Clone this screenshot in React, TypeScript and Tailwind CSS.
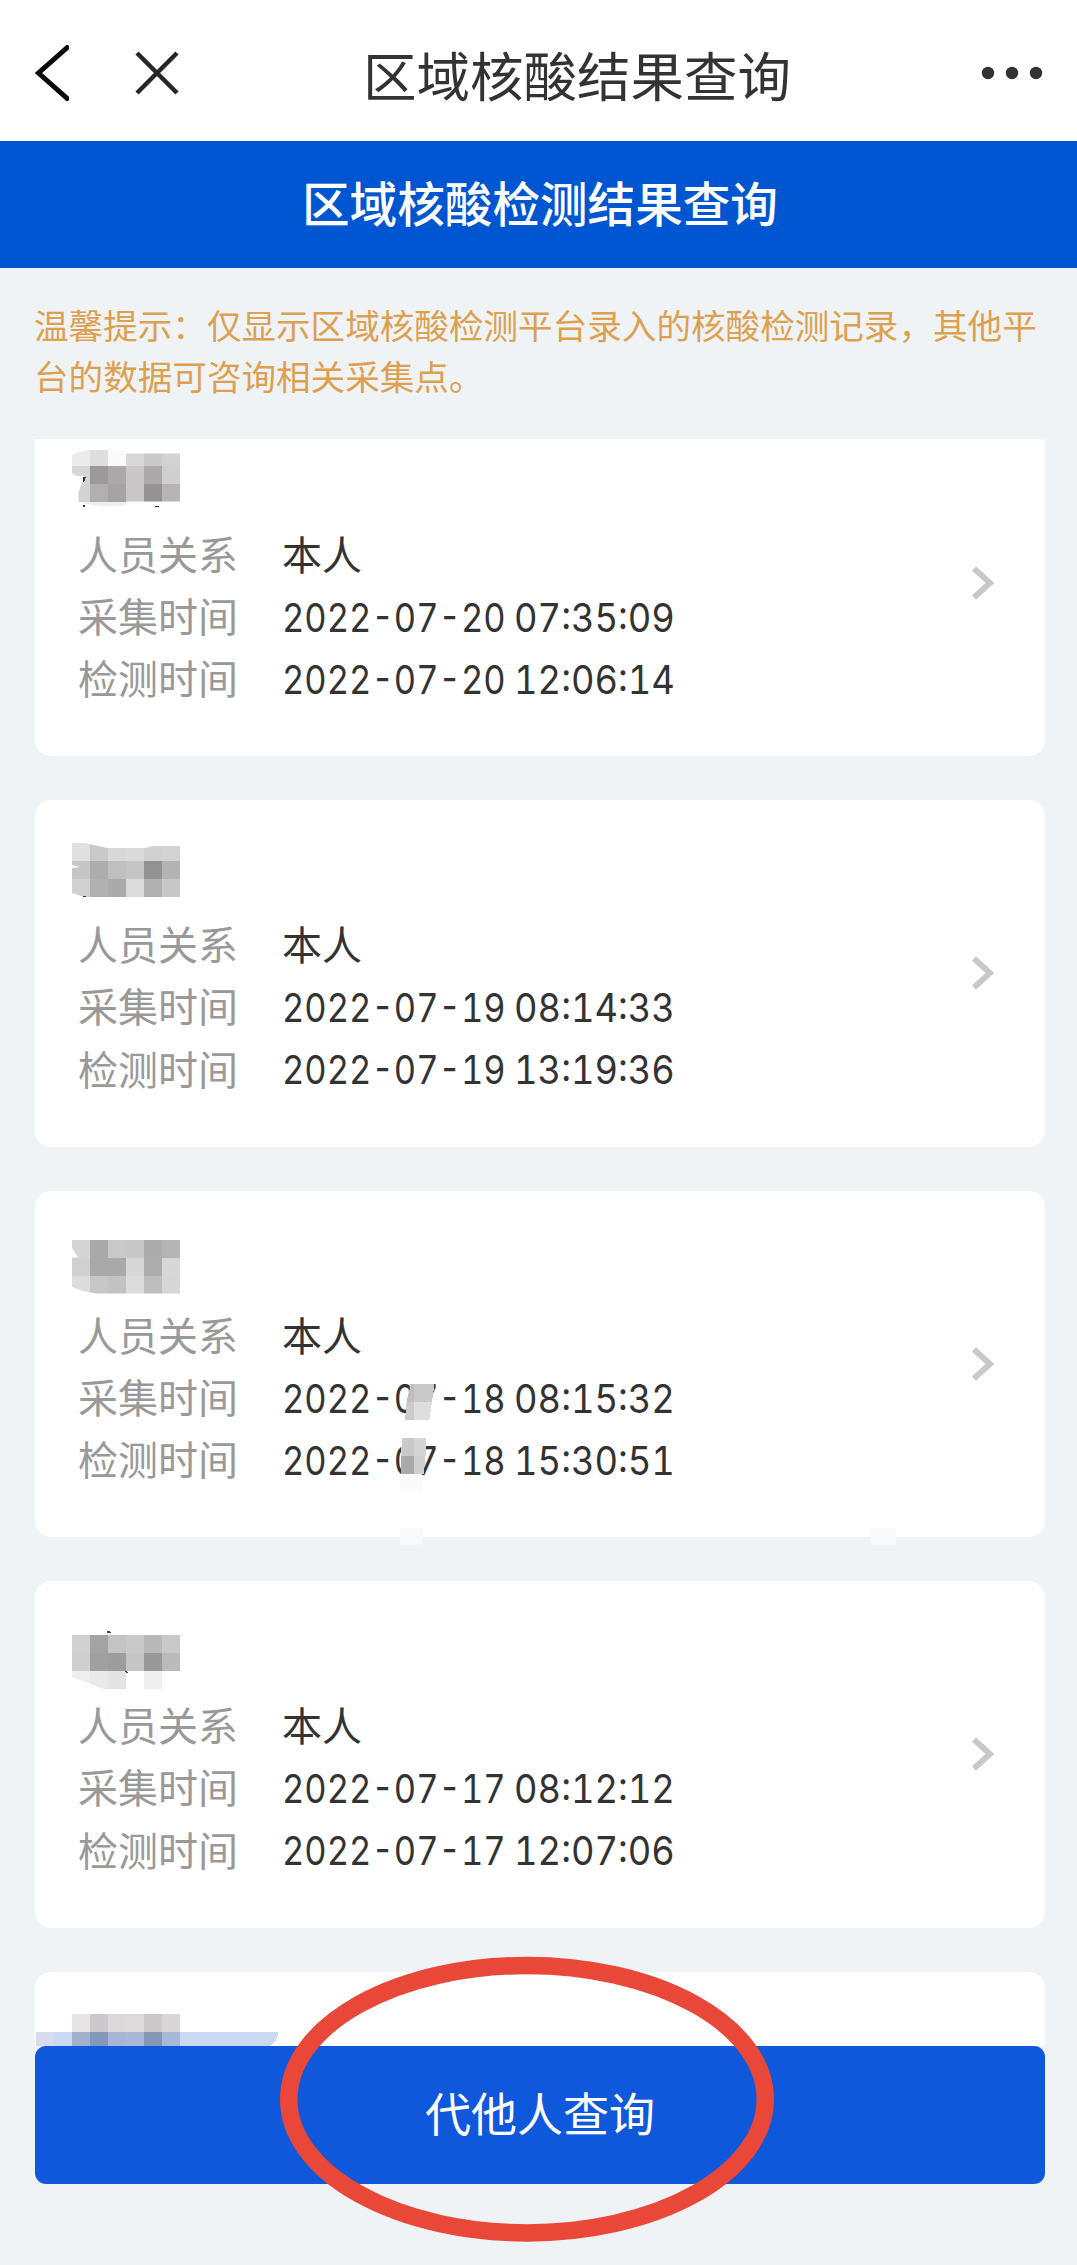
import type { ReactNode } from "react";

type Rec = {
  id: number
  relation?: string
  collected?: string
  tested?: string
  mosaic: ReactNode
  smudge?: ReactNode
}

const CELL = 18

// one colour per cell, 18px grid
function Cells({ x = 37, y, rows }: { x?: number, y: number, rows: string[][] }) {
  return (
    <>
      {rows.map((row, r) => row.map((fill, c) => (
        <rect key={r + "-" + c} x={x + c * CELL} y={y + r * CELL} width={CELL} height={CELL} fill={fill} />
      )))}
    </>
  )
}

const records: Rec[] = [
  {
    id: 1,
    relation: "本人",
    collected: "2022-07-20 07:35:09",
    tested: "2022-07-20 12:06:14",
    mosaic: (
      <>
        <clipPath id="m0"><path d="M37 45 Q44 41 55 40 H91 V43.500 H145 V91.500 H91 V95 Q70 98 44 93 V91.500 Q42 84 45 78 L49 66 H41 L37 63Z" /></clipPath>
        <g clipPath="url(#m0)">
          <Cells y={37.5} rows={[
            ["#ebebeb", "#dfdede", "#fbf9fa", "#dad9da", "#cac9ca", "#d0d3d2"],
            ["#d8d6d7", "#9b999a", "#aaa8a9", "#c9c7c8", "#aba9aa", "#d0cfd0"],
            ["#d4d2d3", "#b1afb0", "#a5a3a4", "#c9c7c8", "#949293", "#b6b4b5"],
            ["#f3f1f1", "#eeecec", "#efeded", "#ffffff", "#ffffff", "#ffffff"],
          ]} />
        </g>
        <path d="M48 67 h3 l-2 5 h-1Z M47 94.500 h3 v2 h-2Z M120 95.500 h4 v1 h-4Z" fill="#333" />
      </>
    ),
  },
  {
    id: 2,
    relation: "本人",
    collected: "2022-07-19 08:14:33",
    tested: "2022-07-19 13:19:36",
    mosaic: (
      <>
        <clipPath id="m1"><path d="M37 43 H50 L72 48 H110 L118 46 H145 V97 H49 L37 93 V68 L45 67 L37 65Z" /></clipPath>
        <g clipPath="url(#m1)">
          <Cells y={43} rows={[
            ["#e0e0e0", "#c9c9c9", "#d8d8d8", "#dadada", "#d1d1d1", "#d3d3d3"],
            ["#c6c6c6", "#adadad", "#bfbfbf", "#c5c5c5", "#929292", "#b3b3b3"],
            ["#d1d1d1", "#b1b1b1", "#aaaaaa", "#dbdbdb", "#b0b0b0", "#c8c8c8"],
          ]} />
        </g>
        <rect x="48" y="96" width="3" height="1" fill="#333" />
      </>
    ),
  },
  {
    id: 3,
    relation: "本人",
    collected: "2022-07-18 08:15:32",
    tested: "2022-07-18 15:30:51",
    mosaic: (
      <>
        <clipPath id="m2"><path d="M37 48.500 H145 V102.500 H62 Q48 101 37 96 V66.500 H43 L37 57Z" /></clipPath>
        <g clipPath="url(#m2)">
          <Cells y={48.5} rows={[
            ["#d5d5d5", "#a9a9a9", "#c9c9c9", "#c8c8c8", "#acacac", "#b5b5b5"],
            ["#d0d0d0", "#a9a9a9", "#a9a9a9", "#d7d7d7", "#adadad", "#d7d7d7"],
            ["#dcdcdc", "#c7c7c7", "#c2c2c2", "#dcdcdc", "#bdbdbd", "#d6d6d6"],
          ]} />
        </g>
      </>
    ),
    smudge: (
      <>
        <path d="M376 192.500 H399.500 L397 210.500 H371.500Z" fill="#c9c9c9" />
        <path d="M371.500 210.500 H397 L394.500 228.500 H370Z" fill="#dedede" />
        <path d="M374 192.500 h5 V228.500 h-9Z" fill="#a8a8a8" fillOpacity=".35" />
        <path d="M367 246.500 H391 V264.500 H366Z" fill="#d5d5d5" />
        <path d="M366 264.500 H390.500 L389 282.500 H366Z" fill="#cfcfcf" />
        <rect x="366" y="264.500" width="13" height="18" fill="#aaaaaa" />
        <rect x="367" y="246.500" width="12" height="18" fill="#c9c9c9" />
        <rect x="365" y="282.500" width="22" height="18" fill="#fafafa" />
        <rect x="365" y="336.500" width="23" height="17" fill="#f8f9f9" />
        <rect x="836" y="336.500" width="25" height="17" fill="#f8f9f9" />
      </>
    ),
  },
  {
    id: 4,
    relation: "本人",
    collected: "2022-07-17 08:12:12",
    tested: "2022-07-17 12:07:06",
    mosaic: (
      <>
        <clipPath id="m3"><path d="M37 54 H145 V79 L138 77 L135 75 L145 72 V90 H127 V108 H69 L37 96Z" /></clipPath>
        <g clipPath="url(#m3)">
          <Cells y={54} rows={[
            ["#d1d1d1", "#a3a3a3", "#c3c3c3", "#c9c9c9", "#b8b8b8", "#c9c9c9"],
            ["#cfcfcf", "#a0a0a0", "#9d9d9d", "#c6c6c6", "#999999", "#bababa"],
            ["#eeeeee", "#e9e9e9", "#e4e4e4", "#fcfcfc", "#efefef", "#ffffff"],
          ]} />
          <rect x="91" y="90" width="18" height="18" fill="#fff" />
        </g>
        <path d="M72 50 h3 l1 2 h-4Z M88 89.500 h3 l2 2 h-2Z" fill="#444" />
      </>
    ),
  },
  {
    id: 5,
    mosaic: (
      <>
        <Cells y={41.5} rows={[["#e6e4e4", "#cac8ca", "#dbd9d9", "#dcdada", "#cbc8c9", "#d8d6d7"]]} />
        <path d="M1 59.500 H243 Q243 72 232 74.500 V78 H1Z" fill="#cbdaf3" />
        <rect x="1" y="59.500" width="18" height="18" fill="#d8daf0" />
        <Cells y={59.5} rows={[["#a3b0cb", "#8397b8", "#a7b6d4", "#a9b8d6", "#8495b6", "#a8b9d8"]]} />
      </>
    ),
  },
]

function Row({ label, children }: { label: string, children: ReactNode }) {
  return (
    <div className="flex h-[62.300px] items-center whitespace-nowrap text-[40px] leading-none text-[#333]">
      <span className="w-[204px] pb-[3px] text-[#999]">{label}</span>
      {children}
    </div>
  )
}

function Stamp({ value = "" }: { value?: string }) {
  const [date, time] = value.split(" ")
  return (
    <span className="flex pt-[4px] font-['Inter',sans-serif] text-[39.500px] tabular-nums">
      <span className="w-[232px] origin-left scale-x-[0.873]">{date}</span>
      <span className="origin-left scale-x-[0.92]">{time}</span>
    </span>
  )
}

function RecordCard({ rec }: { rec: Rec }) {
  return (
    <div className="relative flex h-[346.500px] shrink-0 items-center justify-between rounded-2xl bg-white pl-[43px] pr-[51px]">
      {rec.relation && (
        <>
          <div className="h-full pt-[113.500px]">
            <Row label="人员关系"><span className="pb-[3px]">{rec.relation}</span></Row>
            <Row label="采集时间"><Stamp value={rec.collected} /></Row>
            <Row label="检测时间"><Stamp value={rec.tested} /></Row>
          </div>
          <svg width="23" height="36" viewBox="0 0 23 36" fill="none" stroke="#c8c8c8" strokeWidth="5.800">
            <path d="M3 3.500 L19 18 L3 32.500" />
          </svg>
        </>
      )}
      <svg className="pointer-events-none absolute left-0 top-0 overflow-visible" width="1010" height="346.500" shapeRendering="crispEdges">
        {rec.mosaic}
        {rec.smudge}
      </svg>
    </div>
  )
}

export default function App() {
  return (
    <div className="relative flex h-[2265px] w-[1077px] flex-col overflow-hidden bg-[#eff3f6] font-['Noto_Sans_CJK_SC',sans-serif]">
      <header className="grid h-[141px] shrink-0 grid-cols-[328px_auto_1fr] items-center bg-white pl-[35px] pr-[34px] pt-[5px]">
        <div className="flex items-center gap-[66px]">
          <svg width="34" height="56" viewBox="0 0 34 56" fill="none" stroke="#0a0a0a" strokeWidth="5">
            <path d="M34 1 L3.500 28 L34 55" />
          </svg>
          <svg width="44" height="44" viewBox="0 0 44 44" fill="none" stroke="#262626" strokeWidth="4.500">
            <path d="M2 2 L42 42 M42 2 L2 42" />
          </svg>
        </div>
        <h1 className="whitespace-nowrap pt-px text-[53.500px] leading-none text-[#333]">区域核酸结果查询</h1>
        <svg className="justify-self-end" width="62" height="14" viewBox="0 0 62 14" fill="#333">
          <circle cx="7" cy="7" r="6.200" />
          <circle cx="31" cy="7" r="6.200" />
          <circle cx="55" cy="7" r="6.200" />
        </svg>
      </header>

      <div className="flex h-[127px] shrink-0 items-center justify-center bg-[#0055d0] pb-[6px] pl-[3px] text-[47.600px] font-medium leading-none text-white">
        区域核酸检测结果查询
      </div>

      <p className="h-[171px] shrink-0 whitespace-nowrap pl-[34px] pt-[31px] text-[34.600px] leading-[51px] text-[#dda04e]">
        温馨提示：仅显示区域核酸检测平台录入的核酸检测记录，其他平<br />台的数据可咨询相关采集点。
      </p>

      <div className="mx-[35px] h-[1607px] w-[1010px] shrink-0 overflow-hidden">
        <div className="-mt-[29.500px] flex flex-col gap-[44px]">
          {records.map(rec => <RecordCard key={rec.id} rec={rec} />)}
        </div>
      </div>

      <button className="mx-[35px] flex h-[138px] w-[1010px] shrink-0 items-center justify-center rounded-[11px] bg-[#0f57db] pb-[8px] text-[46px] leading-none text-white">
        代他人查询
      </button>

      {/* hand drawn ring round the button */}
      <svg className="pointer-events-none absolute left-[278px] top-[1954px]" width="498" height="290" viewBox="0 0 498 290" fill="none">
        <ellipse cx="249" cy="145.200" rx="238.300" ry="133.700" stroke="#e94737" strokeWidth="17.500" />
      </svg>
    </div>
  )
}
